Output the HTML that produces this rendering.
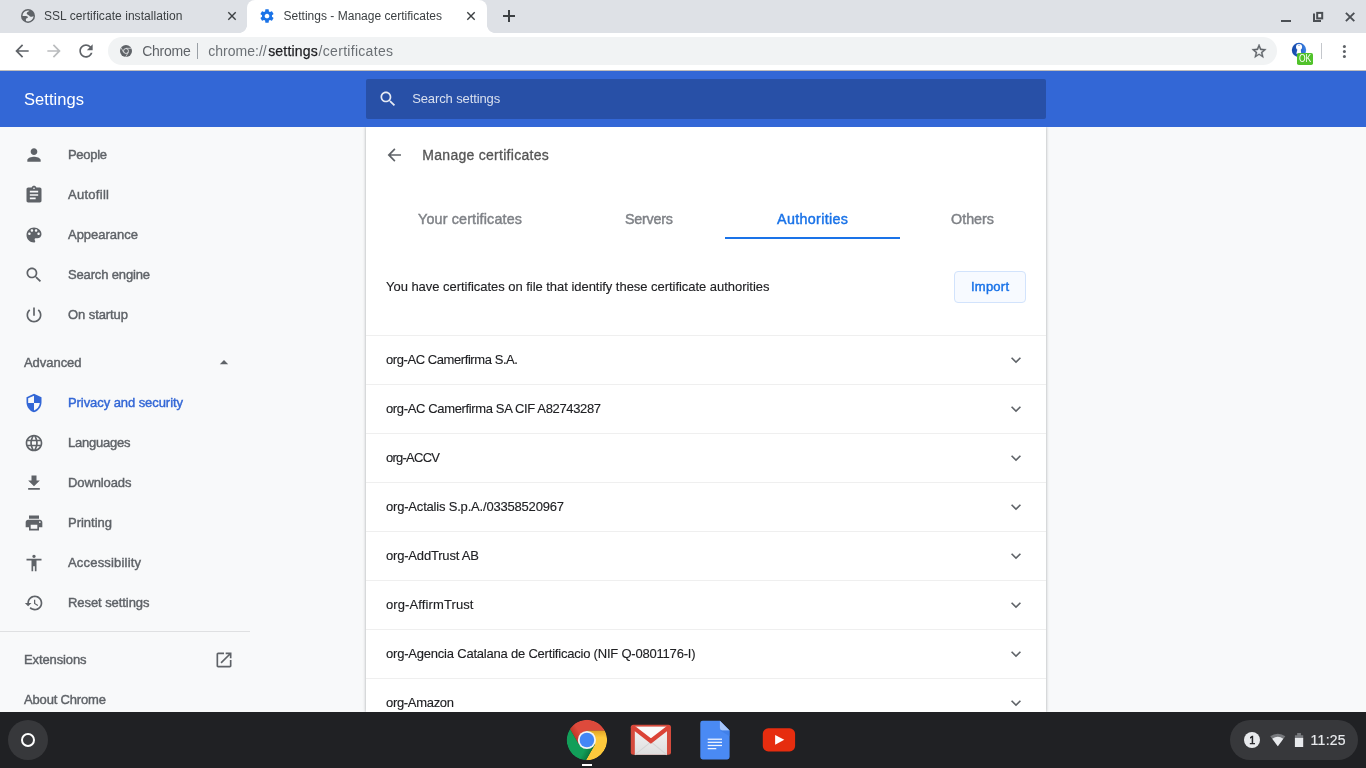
<!DOCTYPE html>
<html lang="en">
<head>
<meta charset="utf-8">
<title>Settings - Manage certificates</title>
<style>
*{box-sizing:border-box;margin:0;padding:0}
html,body{width:1366px;height:768px;overflow:hidden;background:#f8f9fa;will-change:transform;font-family:"Liberation Sans",Arial,sans-serif}
.abs{position:absolute}
.t{position:absolute;white-space:nowrap;line-height:1;font-weight:400}
svg{position:absolute;display:block;overflow:visible}
/* ---------- browser chrome ---------- */
#tabstrip{left:0;top:0;width:1366px;height:33px;background:#dee1e6}
#activetab{left:247px;top:0;width:240px;height:33px;background:#fff;border-radius:8px 8px 0 0}
#toolbar{left:0;top:33px;width:1366px;height:38px;background:#fff}
#omni{left:108px;top:37px;width:1169px;height:28px;border-radius:14px;background:#f1f3f4}
.tabtitle{color:#3c4043}
.url{color:#6b7075}
.urlb{color:#202124;-webkit-text-stroke:.25px #202124}
/* ---------- settings ---------- */
#hdr{left:0;top:71px;width:1366px;height:56px;background:#3367d6}
#search{left:366px;top:79px;width:680px;height:40px;border-radius:2px;background:#2850a7}
#side{left:0;top:127px;width:366px;height:585px;background:#f8f9fa}
#panel{left:366px;top:127px;width:680px;height:585px;background:#fff;box-shadow:0 0 3px rgba(60,64,67,.45);clip-path:inset(0 -6px 0 -6px)}
#tbline{left:0;top:70px;width:1366px;height:1px;background:#c0bdbb}
.white{color:#fff}
.nav{color:#5f6368;-webkit-text-stroke:.42px #5f6368}
.navsel{color:#3367d6;-webkit-text-stroke:.42px #3367d6}
.row{color:#202124;-webkit-text-stroke:.12px #202124}
.title{color:#555;-webkit-text-stroke:.3px #555}
.line{position:absolute;left:366px;width:680px;height:1px;background:#efefef}
.tab{color:#7f8287;-webkit-text-stroke:.45px #7f8287}
.tabsel{color:#1a73e8;-webkit-text-stroke:.45px #1a73e8}
.btn{color:#1a73e8;-webkit-text-stroke:.45px #1a73e8}
.ic{fill:#5f6368}
/* ---------- shelf ---------- */
#shelf{left:0;top:712px;width:1366px;height:56px;background:#202124}
</style>
</head>
<body>
<!-- ============ TAB STRIP ============ -->
<div id="tabstrip" class="abs"></div>
<div id="activetab" class="abs"></div>
<div class="abs" style="left:239px;top:25px;width:8px;height:8px;background:radial-gradient(circle at 0 0,#dee1e6 7.6px,#fff 8.2px)"></div>
<div class="abs" style="left:487px;top:25px;width:8px;height:8px;background:radial-gradient(circle at 100% 0,#dee1e6 7.6px,#fff 8.2px)"></div>
<!-- tab 1 -->
<svg style="left:21px;top:8px" width="14" height="15" viewBox="0.000 -0.900 14.000 15.000" preserveAspectRatio="none"><defs><clipPath id="gl"><circle cx="7" cy="7" r="5.5"/></clipPath></defs><circle cx="7" cy="7" r="7" fill="#5f6368"/><path clip-path="url(#gl)" fill="#e6e9ed" d="M1 7.100L1 1H8.400V2.200C7 3 5.600 3.600 5.700 4.600C5.800 5.800 7.200 5.600 8 6.600C8.800 7.800 10.500 8.200 11.600 7.600L13 7V13H5V11.500C4.600 10.500 5 9.600 6.200 9.200C7.200 8.800 7.200 7.600 6 7.300C4.500 7 3 7.200 1 7.100Z"/></svg>
<span class="t tabtitle" style="left:44px;top:9.84px;font-size:12px;letter-spacing:0.057px;">SSL certificate installation</span>
<svg style="left:228px;top:12px" width="8" height="8" viewBox="0 0 8 8"><path d="M0.3 0.3L7.7 7.7M7.7 0.3L0.3 7.7" stroke="#3c4043" stroke-width="1.4" fill="none"/></svg>
<!-- tab 2 (active) -->
<svg style="left:259px;top:8px" width="16" height="16" viewBox="0 0 24 24"><path fill="#1a73e8" d="M19.43 12.98c.04-.32.07-.64.07-.98s-.03-.66-.07-.98l2.11-1.65c.19-.15.24-.42.12-.64l-2-3.46c-.12-.22-.39-.3-.61-.22l-2.49 1c-.52-.4-1.08-.73-1.69-.98l-.38-2.65C14.46 2.18 14.25 2 14 2h-4c-.25 0-.46.18-.49.42l-.38 2.65c-.61.25-1.17.59-1.69.98l-2.49-1c-.23-.09-.49 0-.61.22l-2 3.46c-.13.22-.07.49.12.64l2.11 1.65c-.04.32-.07.65-.07.98s.03.66.07.98l-2.11 1.65c-.19.15-.24.42-.12.64l2 3.46c.12.22.39.3.61.22l2.49-1c.52.4 1.08.73 1.69.98l.38 2.65c.03.24.24.42.49.42h4c.25 0 .46-.18.49-.42l.38-2.65c.61-.25 1.17-.59 1.69-.98l2.49 1c.23.09.49 0 .61-.22l2-3.46c.12-.22.07-.49-.12-.64l-2.11-1.65zM12 15.5c-1.93 0-3.5-1.57-3.5-3.5s1.57-3.5 3.5-3.5 3.5 1.57 3.5 3.5-1.57 3.5-3.5 3.5z"/></svg>
<span class="t tabtitle" style="left:283.5px;top:9.84px;font-size:12px;letter-spacing:0.015px;">Settings - Manage certificates</span>
<svg style="left:467px;top:12px" width="8" height="8" viewBox="0 0 8 8"><path d="M0.3 0.3L7.7 7.7M7.7 0.3L0.3 7.7" stroke="#3c4043" stroke-width="1.4" fill="none"/></svg>
<!-- new tab + -->
<svg style="left:503px;top:10px" width="12" height="12" viewBox="0 0 12 12"><path d="M6 0V12M0 6H12" stroke="#3c4043" stroke-width="2" fill="none"/></svg>
<!-- window controls -->
<div class="abs" style="left:1281px;top:19.700px;width:10px;height:2.200px;background:#4b4f54"></div>
<svg style="left:1312px;top:11px" width="12" height="12" viewBox="0 0 12 12"><rect x="5.200" y="1.900" width="5" height="5.500" stroke="#4b4f54" stroke-width="2" fill="#eceef1"/><path d="M2 2.600V10H9" stroke="#4b4f54" stroke-width="2" fill="none"/></svg>
<svg style="left:1345px;top:12px" width="10" height="10" viewBox="-0.400 -0.300 10.000 10.000" preserveAspectRatio="none"><path d="M0.500 0.500L8.900 8.900M8.900 0.500L0.500 8.900" stroke="#4b4f54" stroke-width="1.900" fill="none"/></svg>

<!-- ============ TOOLBAR ============ -->
<div id="toolbar" class="abs"></div>
<div id="omni" class="abs"></div>
<svg style="left:12px;top:41px" width="20" height="20" viewBox="0 0 24 24"><path fill="#5f6368" d="M20 11H7.83l5.59-5.59L12 4l-8 8 8 8 1.41-1.41L7.83 13H20v-2z"/></svg>
<svg style="left:44px;top:41px" width="20" height="20" viewBox="0 0 24 24"><path fill="#babcbe" d="M12 4l-1.41 1.41L16.17 11H4v2h12.17l-5.58 5.59L12 20l8-8z"/></svg>
<svg style="left:76px;top:41px" width="20" height="20" viewBox="0 0 24 24"><path fill="#5f6368" d="M17.65 6.35C16.2 4.9 14.21 4 12 4c-4.42 0-7.99 3.58-7.99 8s3.57 8 7.99 8c3.73 0 6.84-2.55 7.73-6h-2.08c-.82 2.33-3.04 4-5.65 4-3.31 0-6-2.69-6-6s2.69-6 6-6c1.66 0 3.14.69 4.22 1.78L13 11h7V4l-2.35 2.35z"/></svg>
<!-- chrome product icon (monochrome) -->
<svg style="left:120px;top:45px" width="12" height="12" viewBox="0 0 24 24"><circle cx="12" cy="12" r="12" fill="#5f6368"/><circle cx="12" cy="12" r="5.4" fill="#f1f3f4"/><circle cx="12" cy="12" r="4.1" fill="#5f6368"/><path d="M12 6.6H23M7.3 14.7L1.9 5.2M16.7 14.7L11.2 24" stroke="#f1f3f4" stroke-width="1.3" fill="none"/></svg>
<span class="t url" style="left:142.2px;top:44.15px;font-size:14px;letter-spacing:-0.239px;color:#5f6368">Chrome</span>
<div class="abs" style="left:197px;top:43px;width:1px;height:16px;background:#9aa0a6"></div>
<span class="t url" style="left:208.3px;top:44.15px;font-size:14px;letter-spacing:0.005px;">chrome://</span>
<span class="t urlb" style="left:268.2px;top:44.15px;font-size:14px;letter-spacing:0.179px;">settings</span>
<span class="t url" style="left:318.6px;top:44.15px;font-size:14px;letter-spacing:0.299px;">/certificates</span>
<!-- star -->
<svg style="left:1250px;top:42px" width="18" height="18" viewBox="-0.555 -0.902 24.971 24.971" preserveAspectRatio="none"><path fill="#5f6368" stroke="#5f6368" stroke-width=".55" d="M22 9.24l-7.19-.62L12 2 9.19 8.63 2 9.24l5.46 4.73L5.82 21 12 16.77 18.18 21l-1.63-7.03L22 9.24zM12 15.4l-3.76 2.27 1-4.28-3.32-2.88 4.38-.38L12 6.1l1.71 4.04 4.38.38-3.32 2.88 1 4.28L12 15.4z"/></svg>
<!-- extension icon with OK badge -->
<svg style="left:1291px;top:42px" width="16" height="16" viewBox="-0.800 -0.800 16.000 16.000" preserveAspectRatio="none"><defs><linearGradient id="ex" x1="0" y1="0" x2="1" y2="0"><stop offset="0" stop-color="#1648a8"/><stop offset=".55" stop-color="#2360c6"/><stop offset="1" stop-color="#3f86e6"/></linearGradient></defs><circle cx="7.200" cy="7.200" r="7.200" fill="url(#ex)"/><circle cx="7.250" cy="4.150" r="3.050" fill="#fff"/><path d="M5.900 5.800H8.800L9.500 11H4.500Z" fill="#fff"/><circle cx="7.200" cy="2.500" r=".55" fill="#2360c6"/></svg>
<div class="abs" style="left:1296.800px;top:53px;width:16.300px;height:11.800px;border-radius:1.800px;background:#51c22b"></div>
<span class="t white" style="left:1298.7px;top:53.64px;font-size:10px;transform:scaleX(.845);transform-origin:0 0">OK</span>
<div class="abs" style="left:1321px;top:43px;width:1px;height:16px;background:#c4c7cc"></div>
<svg style="left:1342px;top:44px" width="5" height="15" viewBox="0 0 5 15"><circle cx="2.400" cy="2.500" r="1.520" fill="#5f6368"/><circle cx="2.400" cy="7.500" r="1.520" fill="#5f6368"/><circle cx="2.400" cy="12.500" r="1.520" fill="#5f6368"/></svg>
<!-- ============ SETTINGS HEADER ============ -->
<div id="hdr" class="abs"></div>
<div id="tbline" class="abs"></div>
<div id="search" class="abs"></div>
<span class="t white" style="left:24px;top:91.03px;font-size:16.5px;letter-spacing:0.054px;">Settings</span>
<svg style="left:378px;top:89px" width="20" height="20" viewBox="0 0 24 24"><path fill="#fff" fill-opacity=".88" d="M15.5 14h-.79l-.28-.27C15.41 12.59 16 11.11 16 9.5 16 5.91 13.09 3 9.5 3S3 5.91 3 9.5 5.91 16 9.5 16c1.61 0 3.09-.59 4.23-1.57l.27.28v.79l5 4.99L20.49 19l-4.99-5zm-6 0C7.01 14 5 11.99 5 9.5S7.01 5 9.5 5 14 7.01 14 9.5 11.99 14 9.5 14z"/></svg>
<span class="t white" style="left:412.2px;top:92.00px;font-size:13px;letter-spacing:-0.115px;color:rgba(255,255,255,.82)">Search settings</span>

<!-- ============ SIDEBAR ============ -->
<div id="side" class="abs"></div>
<svg class="ic" style="left:24px;top:145px" width="20" height="20" viewBox="0 0 24 24"><path d="M12 12c2.21 0 4-1.79 4-4s-1.79-4-4-4-4 1.79-4 4 1.79 4 4 4zm0 2c-2.67 0-8 1.34-8 4v2h16v-2c0-2.66-5.33-4-8-4z"/></svg>
<span class="t nav" style="left:68px;top:148.00px;font-size:13px;letter-spacing:-0.297px;">People</span>
<svg class="ic" style="left:24px;top:185px" width="20" height="20" viewBox="0 0 24 24"><path d="M19 3h-4.18C14.4 1.84 13.3 1 12 1c-1.3 0-2.4.84-2.82 2H5c-1.1 0-2 .9-2 2v14c0 1.1.9 2 2 2h14c1.1 0 2-.9 2-2V5c0-1.1-.9-2-2-2zm-7 0c.55 0 1 .45 1 1s-.45 1-1 1-1-.45-1-1 .45-1 1-1zm2 14H7v-2h7v2zm3-4H7v-2h10v2zm0-4H7V7h10v2z"/></svg>
<span class="t nav" style="left:68px;top:188.00px;font-size:13px;letter-spacing:0.281px;">Autofill</span>
<svg class="ic" style="left:24px;top:225px" width="20" height="20" viewBox="0 0 24 24"><path d="M12 3c-4.97 0-9 4.03-9 9s4.03 9 9 9c.83 0 1.5-.67 1.5-1.5 0-.39-.15-.74-.39-1.01-.23-.26-.38-.61-.38-.99 0-.83.67-1.5 1.5-1.5H16c2.76 0 5-2.24 5-5 0-4.42-4.03-8-9-8zm-5.500 9c-.83 0-1.500-.67-1.500-1.500S5.670 9 6.500 9 8 9.670 8 10.500 7.330 12 6.500 12zm3-4C8.670 8 8 7.330 8 6.500S8.670 5 9.500 5s1.500.67 1.500 1.500S10.330 8 9.500 8zm5 0c-.83 0-1.500-.67-1.500-1.500S13.670 5 14.500 5s1.500.67 1.500 1.500S15.330 8 14.500 8zm3 4c-.83 0-1.500-.67-1.500-1.500S16.670 9 17.500 9s1.500.67 1.500 1.500-.67 1.500-1.500 1.500z"/></svg>
<span class="t nav" style="left:68px;top:228.00px;font-size:13px;letter-spacing:-0.014px;">Appearance</span>
<svg class="ic" style="left:24px;top:265px" width="20" height="20" viewBox="0 0 24 24"><path d="M15.5 14h-.79l-.28-.27C15.41 12.59 16 11.11 16 9.5 16 5.91 13.09 3 9.5 3S3 5.91 3 9.5 5.91 16 9.5 16c1.61 0 3.09-.59 4.23-1.57l.27.28v.79l5 4.99L20.49 19l-4.99-5zm-6 0C7.01 14 5 11.99 5 9.5S7.01 5 9.5 5 14 7.01 14 9.5 11.99 14 9.5 14z"/></svg>
<span class="t nav" style="left:68px;top:268.00px;font-size:13px;letter-spacing:-0.154px;">Search engine</span>
<svg class="ic" style="left:24px;top:305px" width="20" height="20" viewBox="0 0 24 24"><path d="M13 3h-2v10h2V3zm4.830 2.170l-1.420 1.420C17.990 7.860 19 9.810 19 12c0 3.870-3.130 7-7 7s-7-3.130-7-7c0-2.190 1.010-4.140 2.580-5.420L6.170 5.170C4.230 6.820 3 9.260 3 12c0 4.970 4.030 9 9 9s9-4.030 9-9c0-2.740-1.230-5.180-3.170-6.830z"/></svg>
<span class="t nav" style="left:68px;top:308.00px;font-size:13px;letter-spacing:-0.078px;">On startup</span>

<span class="t nav" style="left:24px;top:356.00px;font-size:13px;letter-spacing:-0.047px;">Advanced</span>
<svg class="ic" style="left:214px;top:352px" width="20" height="21" viewBox="0.000 -0.720 24.000 25.200" preserveAspectRatio="none"><path d="M7 14l5-5 5 5z"/></svg>

<svg style="left:24px;top:393px" width="20" height="20" viewBox="0 0 24 24"><path fill="#3367d6" d="M12 1L3 5v6c0 5.550 3.840 10.740 9 12 5.160-1.260 9-6.450 9-12V5l-9-4zm0 10.990h7c-.53 4.120-3.280 7.790-7 8.940V12H5V6.300l7-3.110v8.800z"/></svg>
<span class="t navsel" style="left:68px;top:396.00px;font-size:13px;letter-spacing:-0.070px;">Privacy and security</span>
<svg class="ic" style="left:24px;top:433px" width="20" height="20" viewBox="0 0 24 24"><path d="M11.990 2C6.470 2 2 6.480 2 12s4.470 10 9.990 10C17.520 22 22 17.520 22 12S17.520 2 11.990 2zm6.930 6h-2.950c-.32-1.250-.78-2.450-1.380-3.560 1.840.63 3.370 1.910 4.330 3.560zM12 4.040c.83 1.200 1.480 2.530 1.910 3.960h-3.820c.43-1.430 1.080-2.760 1.910-3.960zM4.260 14C4.100 13.360 4 12.690 4 12s.1-1.360.26-2h3.380c-.08.66-.14 1.320-.14 2 0 .68.06 1.340.14 2H4.260zm.82 2h2.950c.32 1.250.78 2.450 1.380 3.560-1.840-.63-3.370-1.900-4.330-3.560zm2.950-8H5.080c.96-1.660 2.490-2.930 4.330-3.560C8.810 5.550 8.350 6.750 8.030 8zM12 19.960c-.83-1.200-1.480-2.530-1.910-3.960h3.820c-.43 1.430-1.080 2.760-1.910 3.960zM14.340 14H9.660c-.09-.66-.16-1.320-.16-2 0-.68.07-1.350.16-2h4.680c.09.65.16 1.320.16 2 0 .68-.07 1.340-.16 2zm.25 5.560c.6-1.110 1.060-2.310 1.380-3.560h2.950c-.96 1.650-2.490 2.930-4.330 3.560zM16.360 14c.08-.66.14-1.320.14-2 0-.68-.06-1.340-.14-2h3.380c.16.64.26 1.310.26 2s-.1 1.360-.26 2h-3.380z"/></svg>
<span class="t nav" style="left:68px;top:436.00px;font-size:13px;letter-spacing:-0.230px;">Languages</span>
<svg class="ic" style="left:24px;top:473px" width="20" height="20" viewBox="0 0 24 24"><path d="M19 9h-4V3H9v6H5l7 7 7-7zM5 18v2h14v-2H5z"/></svg>
<span class="t nav" style="left:68px;top:476.00px;font-size:13px;letter-spacing:-0.104px;">Downloads</span>
<svg class="ic" style="left:24px;top:513px" width="20" height="20" viewBox="0 0 24 24"><path d="M19 8H5c-1.660 0-3 1.340-3 3v6h4v4h12v-4h4v-6c0-1.660-1.340-3-3-3zm-3 11H8v-5h8v5zm3-7c-.55 0-1-.45-1-1s.45-1 1-1 1 .45 1 1-.45 1-1 1zm-1-9H6v4h12V3z"/></svg>
<span class="t nav" style="left:68px;top:516.00px;font-size:13px;letter-spacing:-0.011px;">Printing</span>
<svg class="ic" style="left:24px;top:553px" width="20" height="20" viewBox="0 0 24 24"><path d="M12 2c1.100 0 2 .9 2 2s-.9 2-2 2-2-.9-2-2 .9-2 2-2zm9 7h-6v13h-2v-6h-2v6H9V9H3V7h18v2z"/></svg>
<span class="t nav" style="left:68px;top:556.00px;font-size:13px;letter-spacing:0.184px;">Accessibility</span>
<svg class="ic" style="left:24px;top:593px" width="20" height="20" viewBox="0 0 24 24"><path d="M13 3c-4.970 0-9 4.030-9 9H1l3.890 3.890.07.14L9 12H6c0-3.870 3.130-7 7-7s7 3.130 7 7-3.130 7-7 7c-1.930 0-3.680-.79-4.940-2.060l-1.420 1.420C8.270 19.990 10.510 21 13 21c4.970 0 9-4.030 9-9s-4.030-9-9-9zm-1 5v5l4.280 2.540.72-1.210-3.500-2.080V8H12z"/></svg>
<span class="t nav" style="left:68px;top:596.00px;font-size:13px;letter-spacing:-0.067px;">Reset settings</span>

<div class="abs" style="left:0;top:631px;width:250px;height:1px;background:#dfe0e2"></div>
<span class="t nav" style="left:24px;top:653.00px;font-size:13px;letter-spacing:-0.122px;">Extensions</span>
<svg class="ic" style="left:214px;top:650px" width="20" height="20" viewBox="0 0 24 24"><path d="M19 19H5V5h7V3H5c-1.110 0-2 .9-2 2v14c0 1.100.89 2 2 2h14c1.100 0 2-.9 2-2v-7h-2v7zM14 3v2h3.590l-9.830 9.830 1.410 1.410L19 6.410V10h2V3h-7z"/></svg>
<span class="t nav" style="left:24px;top:693.00px;font-size:13px;letter-spacing:-0.166px;">About Chrome</span>
<!-- ============ MAIN PANEL ============ -->
<div id="panel" class="abs"></div>
<svg class="ic" style="left:384px;top:145px" width="21" height="20" viewBox="-0.360 0.000 25.200 24.000" preserveAspectRatio="none"><path d="M20 11H7.830l5.590-5.590L12 4l-8 8 8 8 1.410-1.410L7.830 13H20v-2z"/></svg>
<span class="t title" style="left:422.3px;top:148.15px;font-size:14px;letter-spacing:0.283px;">Manage certificates</span>

<!-- tabs -->
<span class="t tab" style="left:418px;top:211.90px;font-size:14.3px;letter-spacing:0.175px;">Your certificates</span>
<span class="t tab" style="left:625px;top:211.90px;font-size:14.3px;letter-spacing:-0.211px;">Servers</span>
<span class="t tabsel" style="left:777px;top:211.90px;font-size:14.3px;letter-spacing:0.344px;">Authorities</span>
<span class="t tab" style="left:951px;top:211.90px;font-size:14.3px;letter-spacing:0.019px;">Others</span>
<div class="abs" style="left:725px;top:236.5px;width:175px;height:2px;background:#1a73e8"></div>

<!-- description + import -->
<span class="t row" style="left:386px;top:280.00px;font-size:13px;letter-spacing:-0.037px;">You have certificates on file that identify these certificate authorities</span>
<div class="abs" style="left:954px;top:271px;width:72px;height:32px;border:1px solid #d2e3fc;border-radius:4px;background:#f7faff"></div>
<span class="t btn" style="left:971px;top:280.00px;font-size:13px;letter-spacing:0.231px;">Import</span>

<!-- list -->
<div class="line" style="top:335px"></div>
<span class="t row" style="left:386px;top:353.00px;font-size:13px;letter-spacing:-0.423px;">org-AC Camerfirma S.A.</span>
<svg class="ic" style="left:1006px;top:350px" width="20" height="20" viewBox="0 0 24 24"><path d="M16.590 8.590L12 13.170 7.410 8.590 6 10l6 6 6-6z"/></svg>
<div class="line" style="top:384px"></div>
<span class="t row" style="left:386px;top:402.00px;font-size:13px;letter-spacing:-0.360px;">org-AC Camerfirma SA CIF A82743287</span>
<svg class="ic" style="left:1006px;top:399px" width="20" height="20" viewBox="0 0 24 24"><path d="M16.590 8.590L12 13.170 7.410 8.590 6 10l6 6 6-6z"/></svg>
<div class="line" style="top:433px"></div>
<span class="t row" style="left:386px;top:451.00px;font-size:13px;letter-spacing:-0.750px;">org-ACCV</span>
<svg class="ic" style="left:1006px;top:448px" width="20" height="20" viewBox="0 0 24 24"><path d="M16.590 8.590L12 13.170 7.410 8.590 6 10l6 6 6-6z"/></svg>
<div class="line" style="top:482px"></div>
<span class="t row" style="left:386px;top:500.00px;font-size:13px;letter-spacing:-0.192px;">org-Actalis S.p.A./03358520967</span>
<svg class="ic" style="left:1006px;top:497px" width="20" height="20" viewBox="0 0 24 24"><path d="M16.590 8.590L12 13.170 7.410 8.590 6 10l6 6 6-6z"/></svg>
<div class="line" style="top:531px"></div>
<span class="t row" style="left:386px;top:549.00px;font-size:13px;letter-spacing:-0.188px;">org-AddTrust AB</span>
<svg class="ic" style="left:1006px;top:546px" width="20" height="20" viewBox="0 0 24 24"><path d="M16.590 8.590L12 13.170 7.410 8.590 6 10l6 6 6-6z"/></svg>
<div class="line" style="top:580px"></div>
<span class="t row" style="left:386px;top:598.00px;font-size:13px;letter-spacing:0.109px;">org-AffirmTrust</span>
<svg class="ic" style="left:1006px;top:595px" width="20" height="20" viewBox="0 0 24 24"><path d="M16.590 8.590L12 13.170 7.410 8.590 6 10l6 6 6-6z"/></svg>
<div class="line" style="top:629px"></div>
<span class="t row" style="left:386px;top:647.00px;font-size:13px;letter-spacing:-0.209px;">org-Agencia Catalana de Certificacio (NIF Q-0801176-I)</span>
<svg class="ic" style="left:1006px;top:644px" width="20" height="20" viewBox="0 0 24 24"><path d="M16.590 8.590L12 13.170 7.410 8.590 6 10l6 6 6-6z"/></svg>
<div class="line" style="top:678px"></div>
<span class="t row" style="left:386px;top:696.00px;font-size:13px;letter-spacing:-0.312px;">org-Amazon</span>
<svg class="ic" style="left:1006px;top:693px" width="20" height="20" viewBox="0 0 24 24"><path d="M16.590 8.590L12 13.170 7.410 8.590 6 10l6 6 6-6z"/></svg>
<!-- ============ SHELF ============ -->
<div id="shelf" class="abs"></div>
<!-- launcher -->
<div class="abs" style="left:8px;top:720px;width:40px;height:40px;border-radius:20px;background:#37383b"></div>
<div class="abs" style="left:21px;top:733px;width:14px;height:14px;border-radius:7px;border:2px solid #fff"></div>
<!-- chrome -->
<svg style="left:566px;top:719px" width="42" height="42" viewBox="-24.832 -24.950 49.901 49.901" preserveAspectRatio="none">
  <defs>
    <clipPath id="cc"><circle r="24"/></clipPath>
    <linearGradient id="sr" gradientUnits="userSpaceOnUse" x1="-14.800" y1="-3.800" x2="-8" y2="-7.700"><stop offset="0" stop-color="#a52714" stop-opacity=".55"/><stop offset="1" stop-color="#a52714" stop-opacity="0"/></linearGradient>
    <linearGradient id="sy" gradientUnits="userSpaceOnUse" x1="10" y1="-10.900" x2="10" y2="-3"><stop offset="0" stop-color="#bf7a0c" stop-opacity=".45"/><stop offset="1" stop-color="#bf7a0c" stop-opacity="0"/></linearGradient>
    <linearGradient id="sg" gradientUnits="userSpaceOnUse" x1="4.100" y1="14.700" x2="-2.700" y2="10.800"><stop offset="0" stop-color="#055524" stop-opacity=".5"/><stop offset="1" stop-color="#055524" stop-opacity="0"/></linearGradient>
  </defs>
  <g clip-path="url(#cc)">
    <path d="M-20.130 -13.070A24 24 0 0 1 21.380 -10.900L0 -10.900L0 0L-9.440 5.450Z" fill="#de4a3c"/>
    <path d="M-20.130 -13.070A24 24 0 0 1 21.380 -10.900L0 -10.900L0 0L-9.440 5.450Z" fill="url(#sr)"/>
    <path d="M21.380 -10.900A24 24 0 0 1 -1.250 23.970L9.440 5.450L0 0L0 -10.900Z" fill="#fdc93c"/>
    <path d="M21.380 -10.900A24 24 0 0 1 -1.250 23.970L9.440 5.450L0 0L0 -10.900Z" fill="url(#sy)"/>
    <path d="M-1.250 23.970A24 24 0 0 1 -20.130 -13.070L-9.440 5.450L0 0L9.440 5.450Z" fill="#129e59"/>
    <path d="M-1.250 23.970A24 24 0 0 1 -20.130 -13.070L-9.440 5.450L0 0L9.440 5.450Z" fill="url(#sg)"/>
  </g>
  <circle r="10.800" fill="#f3f3f3"/>
  <circle r="8.650" fill="#4386f5"/>
</svg>
<div class="abs" style="left:582px;top:764px;width:10px;height:2px;background:#fff"></div>
<!-- gmail -->
<svg style="left:630px;top:724px" width="41" height="31" viewBox="-0.796 -0.800 40.796 31.000" preserveAspectRatio="none">
  <defs><linearGradient id="gm" x1="0" y1="0" x2="0" y2="1"><stop offset="0" stop-color="#f4f4f4"/><stop offset="1" stop-color="#dedede"/></linearGradient></defs>
  <rect x="0" y="0" width="40" height="30" rx="2.5" fill="#d54b3d"/>
  <rect x="4" y="2" width="32" height="28" fill="url(#gm)"/>
  <path d="M4 30L20 17L36 30" fill="none" stroke="#d4d4d4" stroke-width="1"/>
  <path d="M4 2H36L20 14.5Z" fill="#fafafa"/>
  <path d="M1.5 1.8L20 16.2L38.5 1.8" fill="none" stroke="#db4437" stroke-width="4.2" stroke-linejoin="miter"/>
</svg>
<!-- docs -->
<svg style="left:700px;top:720px" width="30" height="40" viewBox="-0.300 -0.700 30.000 40.000" preserveAspectRatio="none">
  <path d="M2.4 0H19.6L29.3 9.7V36.3A2.4 2.4 0 0 1 26.9 38.700H2.4A2.4 2.4 0 0 1 0 36.300V2.4A2.4 2.4 0 0 1 2.4 0Z" fill="#4a8af4"/>
  <path d="M19.600 0L29.300 9.700H22A2.4 2.4 0 0 1 19.600 7.300Z" fill="#a6c5fa"/>
  <path d="M19.9 9.700H29.300V15.5Z" fill="#3b78e0" opacity=".55"/>
  <rect x="7.400" y="17.900" width="14.300" height="1.250" fill="#f1f5fe"/>
  <rect x="7.400" y="21" width="14.300" height="1.250" fill="#f1f5fe"/>
  <rect x="7.400" y="24.150" width="14.300" height="1.250" fill="#f1f5fe"/>
  <rect x="7.400" y="27.300" width="8.600" height="1.250" fill="#f1f5fe"/>
</svg>
<!-- youtube -->
<svg style="left:762px;top:728px" width="34" height="24" viewBox="-0.800 -0.350 34.000 24.000" preserveAspectRatio="none">
  <rect x="0" y="0" width="32.300" height="23.100" rx="5.5" fill="#e62d0f"/>
  <path d="M12.300 6.600L21.500 11.500L12.300 16.400Z" fill="#fff"/>
</svg>
<!-- status tray -->
<div class="abs" style="left:1230px;top:720px;width:128px;height:40px;border-radius:20px;background:#37383b"></div>
<div class="abs" style="left:1244px;top:732px;width:16px;height:16px;border-radius:8px;background:#e8eaed"></div>
<span class="t white" style="left:1249.3px;top:734.86px;font-size:10.8px;color:#202124;-webkit-text-stroke:.5px #202124">1</span>
<svg style="left:1270px;top:733px" width="16" height="14" viewBox="-0.300 -0.700 16.000 14.000" preserveAspectRatio="none"><path d="M7.500 12.500L0 2.500A12.500 12.500 0 0 1 15 2.500Z" fill="#77797d"/><path d="M7.500 12.500L1.980 5.140A9.200 9.200 0 0 1 13.020 5.140Z" fill="#e8eaed"/></svg>
<svg style="left:1294px;top:732px" width="10" height="15" viewBox="-0.900 -0.900 10.000 15.000" preserveAspectRatio="none"><path d="M2.250 0H6.050V2.300H8.300V5.500H0V2.300H2.250Z" fill="#77797d"/><rect x="0" y="5" width="8.300" height="9.100" fill="#e8eaed"/></svg>
<span class="t white" style="left:1310.6px;top:733.15px;font-size:14px;letter-spacing:0.250px;color:#e8eaed;-webkit-text-stroke:.2px #e8eaed">11:25</span>
</body>
</html>
